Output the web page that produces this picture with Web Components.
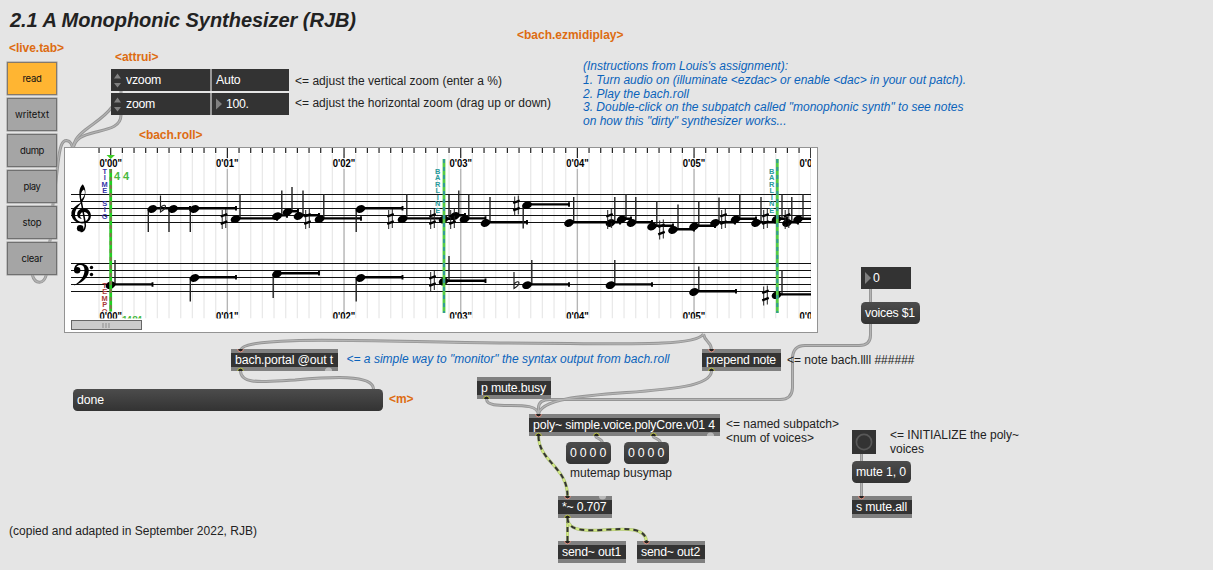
<!DOCTYPE html>
<html lang="en">
<head>
<meta charset="utf-8">
<title>2.1 A Monophonic Synthesizer</title>
<style>
html,body{margin:0;height:100%;overflow:hidden;background:#e5e5e5}
body{font:12px/14px "Liberation Sans",Arial,sans-serif;color:#222}
</style>
</head>
<body>
<max-patcher>
  <patch-cords></patch-cords>
  <live-tab x="7" y="62" items="read writetxt dump play stop clear" widths="19 34 24 17 19 21"></live-tab>
  <bach-roll x="64" y="147"></bach-roll>

  <max-comment x="10" y="9" fit="346" kind="title">2.1 A Monophonic Synthesizer (RJB)</max-comment>
  <max-comment x="9" y="41" fit="55" kind="tag">&lt;live.tab&gt;</max-comment>
  <max-comment x="115" y="50" fit="43.5" kind="tag">&lt;attrui&gt;</max-comment>
  <max-comment x="139" y="128" fit="63.5" kind="tag">&lt;bach.roll&gt;</max-comment>
  <max-comment x="517" y="28" fit="106.5" kind="tag">&lt;bach.ezmidiplay&gt;</max-comment>
  <max-comment x="389" y="392" fit="24.5" kind="tag">&lt;m&gt;</max-comment>

  <attr-ui x="111" y="69" name="vzoom" namefit="35" value="Auto" valuefit="24.5"></attr-ui>
  <attr-ui x="111" y="93" name="zoom" namefit="29" value="100." valuefit="22.5" numeric></attr-ui>
  <max-comment x="295" y="74" fit="207">&lt;= adjust the vertical zoom (enter a %)</max-comment>
  <max-comment x="295" y="96" fit="256">&lt;= adjust the horizontal zoom (drag up or down)</max-comment>

  <max-comment x="583" y="59" fit="205" kind="info">(Instructions from Louis's assignment):</max-comment>
  <max-comment x="583" y="73" fit="383" kind="info">1. Turn audio on (illuminate &lt;ezdac&gt; or enable &lt;dac&gt; in your out patch).</max-comment>
  <max-comment x="583" y="87" fit="106" kind="info">2. Play the bach.roll</max-comment>
  <max-comment x="583" y="100" fit="380.5" kind="info">3. Double-click on the subpatch called "monophonic synth" to see notes</max-comment>
  <max-comment x="583" y="114" fit="203.5" kind="info">on how this "dirty" synthesizer works...</max-comment>

  <max-object x="231" y="349" w="107" fit="98" in="9" out="9 97g">bach.portal @out t</max-object>
  <max-comment x="346.5" y="352" fit="323" kind="info">&lt;= a simple way to "monitor" the syntax output from bach.roll</max-comment>
  <max-object x="702" y="349" w="79" fit="70" in="9" out="9">prepend note</max-object>
  <max-comment x="787" y="353" fit="127.5">&lt;= note bach.llll ######</max-comment>
  <max-message x="73" y="389" w="310" fit="27">done</max-message>
  <max-object x="477" y="377" w="74" fit="65" out="9">p mute.busy</max-object>
  <max-object x="529" y="414" w="191" fit="182" in="9" out="9 67 124 181g">poly~ simple.voice.polyCore.v01 4</max-object>
  <max-comment x="726" y="417" fit="113">&lt;= named subpatch&gt;</max-comment>
  <max-comment x="726" y="431" fit="88">&lt;num of voices&gt;</max-comment>
  <max-message x="566" y="442" w="45" fit="36">0 0 0 0</max-message>
  <max-message x="624" y="442" w="45" fit="36">0 0 0 0</max-message>
  <max-comment x="570" y="466" fit="102">mutemap busymap</max-comment>
  <max-object x="558" y="496" w="54" fit="44.5" in="9 44g" out="9">*~ 0.707</max-object>
  <max-object x="558" y="541" w="68" fit="59" in="9">send~ out1</max-object>
  <max-object x="637" y="541" w="68" fit="59" in="9">send~ out2</max-object>

  <max-number x="861" y="267" w="50">0</max-number>
  <max-message x="861" y="302" w="59" fit="50">voices $1</max-message>
  <max-button x="852" y="430"></max-button>
  <max-comment x="890" y="428" fit="129">&lt;= INITIALIZE the poly~</max-comment>
  <max-comment x="890" y="442" fit="34">voices</max-comment>
  <max-message x="852" y="461" w="59" fit="50">mute 1, 0</max-message>
  <max-object x="852" y="496" w="60" fit="51" in="9">s mute.all</max-object>
  <max-comment x="9" y="524" fit="248">(copied and adapted in September 2022, RJB)</max-comment>
</max-patcher>

<script>
/* Spread or tighten the letters of a span so it takes up a given width. */
function fitText(el, width){
  if(!width) return;
  el.style.letterSpacing = '0';
  const len = (el.dataset.len|0) || el.textContent.length;
  const natural = el.getBoundingClientRect().width;
  el.style.letterSpacing = ((width - natural) / len).toFixed(3) + 'px';
}

/* Base of everything placed on the patcher's free canvas. */
class PatchNode extends HTMLElement{
  connectedCallback(){
    const root = this.shadowRoot || this.attachShadow({mode:'open'});
    root.innerHTML = `<style>:host{display:block;position:absolute;box-sizing:border-box;white-space:nowrap}
      span{display:inline-block;white-space:pre}</style>` + this.render();
    this.style.left = this.getAttribute('x') + 'px';
    this.style.top = this.getAttribute('y') + 'px';
    if(this.hasAttribute('w')) this.style.width = this.getAttribute('w') + 'px';
    const t = root.querySelector('.text');
    if(t){ t.dataset.len = this.textContent.length; fitText(t, +this.getAttribute('fit')); }
    root.querySelectorAll('[data-fit]').forEach(s => fitText(s, +s.dataset.fit));
  }
}

customElements.define('max-patcher', class extends HTMLElement{
  constructor(){
    super();
    this.attachShadow({mode:'open'}).innerHTML =
      `<style>:host{display:block;position:relative;width:1213px;height:570px;background:#e5e5e5;overflow:hidden}</style><slot></slot>`;
  }
});

customElements.define('max-comment', class extends PatchNode{
  render(){
    return `<style>
      :host([kind=title]){font:italic bold 20px/23px "Liberation Sans",Arial,sans-serif}
      :host([kind=tag]){font-weight:bold;color:#dd6c12}
      :host([kind=info]){font-style:italic;color:#0a63bb}
    </style><span class="text"><slot></slot></span>`;
  }
});

customElements.define('max-object', class extends PatchNode{
  ports(name, colour){
    const up = name === 'out';
    return (this.getAttribute(name) || '').split(' ').filter(Boolean).map(p => {
      const x = parseInt(p) + .5, ghost = p.endsWith('g');
      const arc = (r) => up ? `M${x-r} 22a${r} ${r} 0 0 1 ${2*r} 0` : `M${x-r} 0a${r} ${r} 0 0 0 ${2*r} 0`;
      return ghost ? `<path d="${arc(3.6)}z" fill="#b9b9b9"/>`
        : `<path d="${arc(2.8)}z" fill="#222"/><path d="${arc(2.9)}" fill="none" stroke="${colour}" stroke-width="1"/>`;
    }).join('');
  }
  render(){
    return `<style>
      :host{height:22px;background:#333;border:solid #808080;border-width:4px 0;color:#fff;padding-left:4px;font-size:12.3px;line-height:14px}
      svg{position:absolute;left:0;top:-4px;width:100%;height:22px}
    </style><span class="text"><slot></slot></span>
    <svg>${this.ports('in','#e2907f')}${this.ports('out','#b8bf45')}</svg>`;
  }
});

customElements.define('max-message', class extends PatchNode{
  render(){
    return `<style>:host{height:22px;border-radius:4.5px;background:linear-gradient(#4c4c4c,#333);color:#fff;padding-left:4px;font-size:12.3px;line-height:22px}</style>
      <span class="text"><slot></slot></span>`;
  }
});

customElements.define('max-number', class extends PatchNode{
  render(){
    return `<style>:host{height:22px;background:#333;color:#fff;display:flex;align-items:center;padding-left:4px;gap:2px;font-size:12.3px}</style>
      <svg width="6" height="12"><path d="M0 0L6 6L0 12z" fill="#808080"/></svg><span><slot></slot></span>`;
  }
});

customElements.define('max-button', class extends PatchNode{
  render(){
    return `<style>:host{width:24px;height:24px;background:#333}svg{display:block}</style>
      <svg width="24" height="24"><circle cx="12" cy="12" r="7.6" fill="none" stroke="#585858" stroke-width="1.7"/></svg>`;
  }
});

customElements.define('attr-ui', class extends PatchNode{
  render(){
    const a = n => this.getAttribute(n);
    return `<style>
      :host{width:178px;height:22px;background:#333;color:#fff;display:grid;grid-template-columns:101px 77px;font-size:12.3px}
      div{display:flex;align-items:center}
      .n{gap:5px;padding-left:3px;border-right:2px solid #999}.v{padding-left:4px;gap:4px}
    </style>
    <div class="n"><svg width="7" height="17"><path d="M0 6.5L3.5 1.5L7 6.5zM0 11L3.5 15.5L7 11z" fill="#808080"/></svg><span data-fit="${a('namefit')}">${a('name')}</span></div>
    <div class="v">${this.hasAttribute('numeric') ? '<svg width="6" height="12"><path d="M0 0.5L6 6L0 11.5z" fill="#808080"/></svg>' : ''}<span data-fit="${a('valuefit')}">${a('value')}</span></div>`;
  }
});

customElements.define('live-tab', class extends PatchNode{
  render(){
    const w = this.getAttribute('widths').split(' ');
    return `<style>
      :host{display:grid;grid-auto-rows:33px;gap:3px;width:50px;font:9.5px/12px Inter,sans-serif;color:#111}
      div{box-sizing:border-box;border:1px solid #707070;background:#a5a5a5;display:flex;align-items:center;justify-content:center;box-shadow:0 0 0 .5px #999}
      div:first-of-type{background:#ffb532;border-color:#85796a}
    </style>` + this.getAttribute('items').split(' ').map((t,i) => `<div><span data-fit="${w[i]}">${t}</span></div>`).join('');
  }
});

customElements.define('patch-cords', class extends HTMLElement{
  connectedCallback(){
    const cords = [
      'M121 91V93','M112 107C104 118 92 124 84 131C77 137 73.5 141 73 149','M121 115C121 127 108 129 96 132C82 135.5 75 138 73 149',
      'M32 274C35 285 44 285 46.5 274M49.5 243C52 234 52 214 53 204C55 190 57 172 58 163C60 146 62 140.5 66.5 140.5C71 141 72 145 73 149',
      'M703.5 334C695 348 610 343 500 343C380 342 240 334 240.5 351',
      'M703.5 334C705 343 711.5 341 711.5 350',
      'M240.5 371C241 385 263 381.5 295 380C330 377 373 374 373.5 389',
      'M711.5 371C711 402 540 383 538.5 415','M486.5 399C487 413 538 397 538.5 415',
      'M870.5 289V303','M870.5 324V335Q870.5 345.5 859 345.5H805Q793 345.5 792.5 358V388Q792 399.5 780 399.5H550Q538.5 399.5 538.5 408V414',
      'M595.5 436C596 439 602 438 602.5 443','M653 436C653.5 439 660 438 660.5 443',
      'M861.5 454V462','M861.5 483V497'];
    const signal = ['M538.5 436C539 462 568 467 567.5 497','M567.5 518V542','M567.5 518C568 546 646 513 646.5 542'];
    this.attachShadow({mode:'open'}).innerHTML = `<style>
      :host{display:block;position:absolute;inset:0}svg{display:block}path{fill:none}
      .o{stroke:#959595;stroke-width:3}.i{stroke:#b4b4b4;stroke-width:1.2}
      .s{stroke:#a9bb77;stroke-width:3}.g{stroke:#d2ea83;stroke-width:2}.d{stroke:#333;stroke-width:2;stroke-dasharray:5 4}
    </style><svg width="1213" height="570">
      ${cords.map(d => `<path class="o" d="${d}"/>`).join('')}${cords.map(d => `<path class="i" d="${d}"/>`).join('')}
      ${signal.map(d => `<path class="s" d="${d}"/><path class="g" d="${d}"/><path class="d" d="${d}"/>`).join('')}
    </svg>`;
  }
});

/* Notation view. Score coordinates are patcher pixels, shifted by the viewBox. */
customElements.define('bach-roll', class extends PatchNode{
  render(){
    const T0 = 110.7, SEC = 116.67;
    let s = '';
    for(let i = -1; i <= 60; i++){
      const x = T0 + i*SEC/10, major = i % 10 === 0;
      if(i !== 0) s += `<path d="M${x} 154V318.5" stroke="#e9e9e9" stroke-width="1.3"/>`;
      if(major && i < 60) s += `<path d="M${x} 169V312" stroke="#b5b5b5" stroke-width="1.3"/>`;
      s += `<path d="M${x} 148V${major ? 158 : 153}" stroke="#222" stroke-width="1.2"/>`;
    }
    for(const y of [194.5,201.5,208.5,215.5,222.5,263.5,270.5,277.5,284.5,291.5])
      s += `<path d="M71 ${y}H811" stroke="#111" stroke-width="1.2"/>`;
    /* head x, head y, stem x, stem end, duration end */
    const notes = [
      [152.3,209,148.3,232,190],[173,209,169,232,190],[194.5,209,190.3,232,236],[235.5,219.2,240,194,277],
      [277,216.2,281.8,190.5,287],[287.5,212,292,187,298],[298.5,216,303,190.5,319],[319.5,219.2,323.8,194,361],
      [360.5,209,356.2,232,402.5],[402.5,219.2,406.8,194,443],[443.5,219.5,449,195,454],[455,216,458.8,190.5,465],
      [464.5,219.2,468.8,194,485.5],[485.5,223,490,197,527],[527,205.2,523.2,228.5,569],[569,223,573.7,197,610],
      [610.5,223,614.8,197,620],[621.5,219.5,626,194,631],[631.5,223,635.8,197,652],[652,226.5,656.8,201,673],
      [673,230,678,204.5,694],[694,226.5,698.8,201,715],[715,223,719,197.5,735],[735.5,219.5,739.8,194,756],
      [756,223,761,197,777],[776.5,219.5,782,194,787],[787,223,791.8,197,798],[798,219.5,803,194,811],
      [110.5,285.2,115,260,152.5],[194.5,278,190.3,301.5,236],[277,274,273.2,298,319],[360.5,278,356.2,301.5,402.5],
      [443.5,281.5,449,256,485.5],[527,285.2,531.8,260,569],[610.5,285.2,614.8,260,652],[694,292,698.8,266.5,736],
      [776.5,295.2,782,270,811]];
    for(const [x,y,sx,se,de] of notes){
      s += `<path d="M${sx} ${y}V${se}" stroke="#222" stroke-width="1.4"/>`;
      s += `<path d="M${x} ${y-.8}H${de}" stroke="#000" stroke-width="2.4"/>`;
      if(de < 811) s += `<path d="M${de} ${y-3}v4.5" stroke="#000" stroke-width="1.9"/>`;
      s += `<ellipse cx="${x}" cy="${y}" rx="5" ry="3.7" transform="rotate(-22 ${x} ${y})"/>`;
    }
    for(const [x,y] of [[224,219],[307.5,219],[390.5,219],[432.5,219],[452.5,219],[516.5,205.5],[609.5,219],[661.5,229.5],
      [723.5,219],[765.5,219],[787,219],[432.5,281],[765.5,295.5]])
      s += `<path d="M${x-1.8} ${y-9}V${y+10}M${x+1.8} ${y-10}V${y+9}" stroke="#222" stroke-width="1"/><path d="M${x-3.3} ${y-2.5}L${x+3.3} ${y-4.9}M${x-3.3} ${y+4.8}L${x+3.3} ${y+2.4}" stroke="#000" stroke-width="2.3"/>`;
    for(const [x,y] of [[163,208.5],[516.5,285]])
      s += `<path d="M${x-2.5} ${y-13}V${y+3.5}C${x+5} ${y-1} ${x+3} ${y-6} ${x-2} ${y-1.5}" fill="none" stroke="#222" stroke-width="1.2"/>`;

    const labels = y => [0,1,2,3,4,5,6].map(i => `<text x="${T0+i*SEC}" y="${y}" text-anchor="middle" textLength="22.5" lengthAdjust="spacingAndGlyphs">0'0${i}"</text>`).join('');
    const column = (word, x, y, step, colour) => `<g fill="${colour}" font-size="7.4" font-weight="bold" text-anchor="middle">` +
      [...word].map((c,i) => c === ' ' ? '' : `<text x="${x}" y="${y + i*step}">${c}</text>`).join('') + '</g>';
    const bar = (x, y1, y2, base, dash) => `<path d="M${x} ${y1}V${y2}" stroke="${base}" stroke-width="2.8"/><path d="M${x} ${y1}V${y2}" stroke="${dash}" stroke-width="2" stroke-dasharray="4 4"/>`;

    return `<style>:host{width:754px;height:186px;background:#fff;border:1px solid #939393}svg{display:block}</style>
    <svg width="752" height="184" viewBox="65 148 752 184" font-family="Liberation Sans,Arial,sans-serif">
      <defs>
        <clipPath id="score"><rect x="65" y="148" width="746" height="170.5"/></clipPath>
        <clipPath id="marks"><rect x="65" y="169" width="746" height="142.5"/></clipPath>
      </defs>
      <g clip-path="url(#score)">${s}
        <g clip-path="url(#marks)">
        ${column('TIME SIG', 104.7, 173.6, 6.48, '#3636a8')}
        ${column('TEMPO', 104.7, 287.8, 6.5, '#a83a3a')}</g>
        ${column('BARLINE', 437.7, 173.8, 6.45, '#2a9b9b')}
        ${column('BARLINE', 771.7, 173.8, 6.45, '#2a9b9b')}
        ${bar(110.7,169,311.5,'#22cf22','#80744a')}
        ${bar(444,159,313,'#55cc44','#329b96')}
        ${bar(777.3,159,313,'#55cc44','#329b96')}
        <path d="M106.5 155H115L110.7 159z" fill="#3fce25"/>
        <g font-size="10.5" font-weight="bold">${labels(167)}${labels(320.3)}</g>
        <text x="114" y="180" font-size="11" font-weight="bold" fill="#49b83f" textLength="15">4 4</text>
        <text x="122" y="324.3" font-size="10" font-weight="bold" fill="#49b83f" textLength="20">14 84</text>
      </g>
      <!-- treble clef -->
      <path d="M80.8 202.5C78.6 195 78.6 187.5 82.8 184.2C86.2 188.5 86.6 195.5 82.4 201.5C79.8 205 75.5 208.5 75 213.5C74.5 218.5 78 221.8 82 221.8C86.5 221.8 88.8 219 88.5 215.8C88 211.5 81.5 210.5 80.2 214.5C79.7 216.5 80.5 218 82 218.8C78.5 218.8 77 216.5 77.2 213.8C78 206.5 89.5 206 90.8 214.5C91.5 220 87.5 223.5 82 223.4C75.5 223.2 71 218.8 71.4 212.8C71.8 208 77.5 205 80.8 202.5zM81.5 199.5C84.5 196.5 86 192.5 84 189.5C81 191 80.5 195 81.5 199.5z" fill-rule="evenodd"/>
      <path d="M81 200L85 222C86 227 84.5 231.5 80.5 231.6" fill="none" stroke="#000" stroke-width="1.5"/>
      <circle cx="80.2" cy="228.2" r="3.3"/>
      <!-- bass clef -->
      <path d="M74.5 271C73.5 265 77.5 263.5 81 263.6C87 263.9 89.8 268 88.5 273C86.8 279 81 283.5 73.8 285.6C80.5 281.5 84.3 276.5 84.5 270.5C84.6 266.5 82.5 264.7 79.8 265C77.8 265.2 76.5 266.2 76.3 268z"/>
      <circle cx="77.2" cy="270.3" r="3.2"/><circle cx="91.5" cy="267.5" r="1.7"/><circle cx="91.5" cy="274.5" r="1.7"/>
      <rect x="71.5" y="320.5" width="70" height="9" fill="#cbcbcb" stroke="#666"/>
      <path d="M103 323v5M106 323v5M109 323v5" stroke="#999" stroke-width="1.2"/>
    </svg>`;
  }
});
</script>
</body>
</html>
